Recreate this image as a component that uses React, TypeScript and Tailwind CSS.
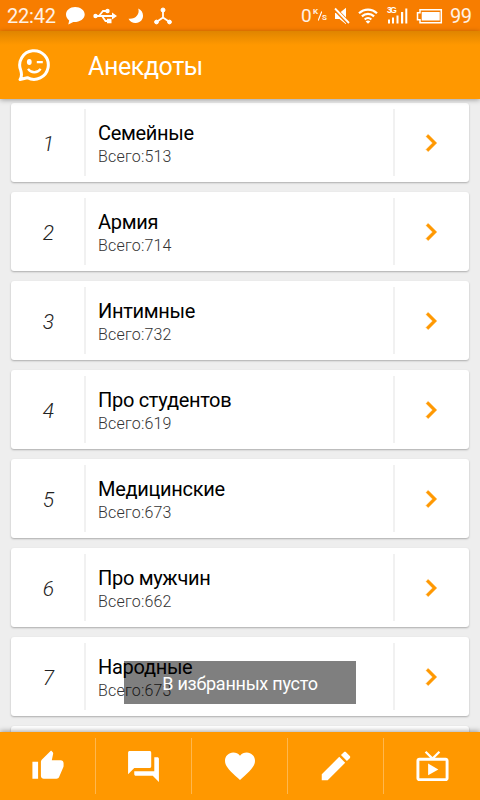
import { ReactNode } from "react";

const categories = [
	{ id: 1, name: "Семейные", total: 513 },
	{ id: 2, name: "Армия", total: 714 },
	{ id: 3, name: "Интимные", total: 732 },
	{ id: 4, name: "Про студентов", total: 619 },
	{ id: 5, name: "Медицинские", total: 673 },
	{ id: 6, name: "Про мужчин", total: 662 },
	{ id: 7, name: "Народные", total: 673 },
];

function Icon({ size, children }: { size: number; children: ReactNode }) {
	return (
		<svg
			width={size}
			height={size}
			viewBox="0 0 24 24"
			fill="currentColor"
			className="shrink-0"
		>
			{children}
		</svg>
	);
}

const tabs = [
	<Icon size={34}>
		<path d="M1 21h4V9H1v12zm22-11c0-1.1-.9-2-2-2h-6.31l.95-4.57.03-.32c0-.41-.17-.79-.44-1.06L14.17 1 7.59 7.59C7.22 7.95 7 8.45 7 9v10c0 1.1.9 2 2 2h9c.83 0 1.54-.5 1.84-1.22l3.02-7.05c.09-.23.14-.47.14-.73v-2z" />
	</Icon>,
	<Icon size={37}>
		<path d="M21 6h-2v9H6v2c0 .55.45 1 1 1h11l4 4V7c0-.55-.45-1-1-1zm-4 6V3c0-.55-.45-1-1-1H3c-.55 0-1 .45-1 1v14l4-4h10c.55 0 1-.45 1-1z" />
	</Icon>,
	<Icon size={36}>
		<path d="M12 21.35l-1.45-1.32C5.4 15.36 2 12.28 2 8.5 2 5.42 4.42 3 7.5 3c1.74 0 3.41.81 4.5 2.09C13.09 3.81 14.76 3 16.5 3 19.58 3 22 5.42 22 8.5c0 3.78-3.4 6.86-8.55 11.54L12 21.35z" />
	</Icon>,
	<Icon size={38}>
		<path d="M3 17.25V21h3.75L17.81 9.94l-3.75-3.75L3 17.25zM20.71 7.04c.39-.39.39-1.02 0-1.41l-2.34-2.34c-.39-.39-1.02-.39-1.41 0l-1.83 1.83 3.75 3.75 1.83-1.83z" />
	</Icon>,
	<Icon size={35}>
		<path d="M21 6h-7.300l3.600-3.600-1.100-1.100L12 5.500 7.800 1.300 6.700 2.400 10.300 6H3c-1.100 0-2 .890-2 2v12c0 1.100.9 2 2 2h18c1.100 0 2-.9 2-2V8c0-1.110-.9-2-2-2zm0 14H3V8h18v12zM9 10v8l7-4z" />
	</Icon>,
];

function StatusBar() {
	return (
		<div className="flex h-[31px] shrink-0 items-center bg-[#f77d00] pl-[7px] pr-2 text-xl leading-none text-white/90">
			<span className="w-[50px] pt-px tracking-[-0.2px]">22:42</span>
			<svg width="20" height="20" viewBox="0 0 20 20" className="ml-2" fill="white">
				<path d="M10.200 1C5 1 1 4.300 1 8.500c0 2.500 1.300 4.500 3.200 5.900L3.300 18.500l5-2.500C14.500 16.300 19.700 13 19.700 8.400 19.700 4.300 15.500 1 10.200 1z" />
			</svg>
			<svg width="24" height="16" viewBox="0 0 24 16" className="ml-2" fill="none" stroke="white" strokeWidth="1.800">
				<path d="M2 8h18M6 8l4-5h4M9 8l3.500 5H16" />
				<circle cx="2.500" cy="8" r="2.200" fill="white" stroke="none" />
				<circle cx="14.500" cy="3" r="2.200" fill="white" stroke="none" />
				<path d="M19 4.500v7l5-3.500zM14 10.700h4.500v4.500H14z" fill="white" stroke="none" />
			</svg>
			<svg width="16" height="16" viewBox="0 0 16 16" className="ml-[11px]" fill="white">
				<path d="M10.200.5c2 5.500-2.700 11-9.700 10.200C2.200 14 5 15.200 7.800 15c4.500-.2 7.400-3.600 7.200-7.500C14.900 4.300 13.200 1.800 10.200.5z" />
			</svg>
			<svg width="18" height="18" viewBox="0 0 18 18" className="ml-[10px]" fill="white" stroke="white">
				<path d="M9 3v7.500L2.500 15M9 10.500l6.500 4.500" fill="none" strokeWidth="1.800" />
				<circle cx="9" cy="3" r="2" />
				<circle cx="2.500" cy="15" r="1.900" />
				<circle cx="15.500" cy="15" r="1.900" />
			</svg>
			<div className="ml-auto flex items-center">
				<span className="w-[9px] text-[19px] tracking-tighter">0</span>
				<span className="ml-[3px] flex w-3 text-[8px] font-bold leading-none">
					<span className="-mt-px">K</span>
					<svg width="4" height="12" viewBox="0 0 4 12" stroke="white" strokeWidth="1.100" className="shrink-0">
						<path d="M.2 11.500L3.800 2.500" />
					</svg>
					<span className="mt-[5px]">S</span>
				</span>
				<svg width="16" height="18" viewBox="0 0 16 18" className="ml-[9px]" fill="white">
					<path d="M1 6h4.500L12 .8v16.500L5.500 12H1z" />
					<path d="M0 1l14.500 15" stroke="#f77d00" strokeWidth="4" />
					<path d="M1 1.500l14 14.500" stroke="white" strokeWidth="1.800" />
				</svg>
				<svg width="20" height="16" viewBox="0 0 20 16" className="ml-2" fill="none" stroke="white" strokeWidth="2.200">
					<path d="M1 5.200c5.200-4.900 12.800-4.900 18 0M3.900 8.400c3.500-3.300 8.700-3.300 12.200 0M6.700 11.500c1.900-1.800 4.700-1.800 6.600 0" />
					<path d="M10 15.700l-2.300-2.300c1.300-1.100 3.300-1.100 4.600 0z" fill="white" stroke="none" />
				</svg>
				<div className="relative ml-[9px] h-[17px] w-[21px]">
					<span className="absolute -top-px left-0 font-['Liberation_Sans'] text-[8.500px] font-bold leading-[8px] tracking-[-1.5px] text-white">
						3G
					</span>
					<svg width="21" height="17" viewBox="0 0 21 17" fill="white">
						<path d="M1 12.500h2v4H1zM5 10.500h2v6H5zM9.500 8.500h2v8h-2zM14 5h2.200v11.500H14zM18.300 1.500h2v15h-2z" />
					</svg>
				</div>
				<svg width="27" height="16" viewBox="0 0 27 16" className="ml-2" fill="white">
					<path d="M4 1.700h21.300v13H4v-3H1.500V4.700H4z" fill="none" stroke="white" strokeWidth="1.500" />
					<path d="M5.700 4h18v8.500h-18z" />
				</svg>
				<span className="ml-[7px] w-[22px] pt-px text-[20px] tracking-[-0.5px]">99</span>
			</div>
		</div>
	);
}

function CategoryCard({ id, name, total }: { id: number; name: string; total: number }) {
	return (
		<li className="flex h-[79px] shrink-0 items-center rounded-[3px] bg-white shadow-[0_1px_2px_rgba(0,0,0,0.28)]">
			<span className="w-[75px] pt-[4px] text-center text-[21px] font-light italic text-[#222]">
				{id}
			</span>
			<div className="-ml-0.5 flex h-[67px] flex-1 flex-col border-x-2 border-[#f1f1f1] pl-3 pt-[11px]">
				<h2 className="text-[20px] leading-[26px] tracking-[-0.3px] text-black">{name}</h2>
				<p className="text-[16px] font-light leading-[22px] tracking-[0.2px] text-[#333]">
					Всего:{total}
				</p>
			</div>
			<div className="flex w-[74px] justify-center pr-0.5 text-[#ff9800]">
				<Icon size={34}>
					<path
						d="M10 6L8.590 7.410 13.170 12l-4.580 4.590L10 18l6-6z"
						stroke="currentColor"
						strokeWidth=".4"
					/>
				</Icon>
			</div>
		</li>
	);
}

export default function App() {
	return (
		<div className="relative flex h-[800px] w-[480px] flex-col overflow-hidden bg-[#eeeeee] font-['Roboto',sans-serif]">
			<StatusBar />
			<header className="z-10 flex h-[68px] shrink-0 items-center bg-[#ff9800] bg-linear-to-b from-[#df8500] to-[#ff9800] to-[14px] pl-[17px] text-white shadow-[0_1px_5px_rgba(0,0,0,0.35)]">
				<svg width="34" height="34" viewBox="0 0 34 34" fill="none" stroke="white" strokeWidth="3">
					<path d="M3.800 22.500a14.300 14.300 0 1 1 6.600 7.200L3 31.500Q5.500 28 3.800 22.500z" strokeLinejoin="round" />
					<path d="M11 20.800c3.200 4.600 9.400 4.600 12.600 0M19.800 14.200h6" strokeWidth="2.300" />
					<ellipse cx="12.300" cy="14" rx="2.400" ry="3" fill="white" stroke="none" />
				</svg>
				<h1 className="ml-[37px] pt-[3px] text-[25px] leading-none tracking-[-0.4px]">Анекдоты</h1>
			</header>
			<ul className="flex min-h-0 flex-1 flex-col gap-2.5 overflow-hidden px-[11px] pt-1">
				{categories.map((category) => (
					<CategoryCard key={category.id} {...category} />
				))}
				<li className="h-[79px] shrink-0 rounded-[3px] bg-white shadow-[0_1px_2px_rgba(0,0,0,0.3)]" />
			</ul>
			<nav className="z-10 grid h-[68px] shrink-0 grid-cols-5 bg-[#ff9800] py-1.5 text-white shadow-[0_-1px_5px_rgba(0,0,0,0.35)]">
				{tabs.map((tab, i) => (
					<button
						key={i}
						className="flex items-center justify-center border-r border-white/30 last:border-r-0"
					>
						{tab}
					</button>
				))}
			</nav>
			<div className="absolute left-[124px] top-[661px] z-20 flex h-[43px] w-[232px] items-center justify-center bg-black/50 pt-0.5 text-[18px] tracking-[-0.25px] text-white">
				В избранных пусто
			</div>
		</div>
	);
}
